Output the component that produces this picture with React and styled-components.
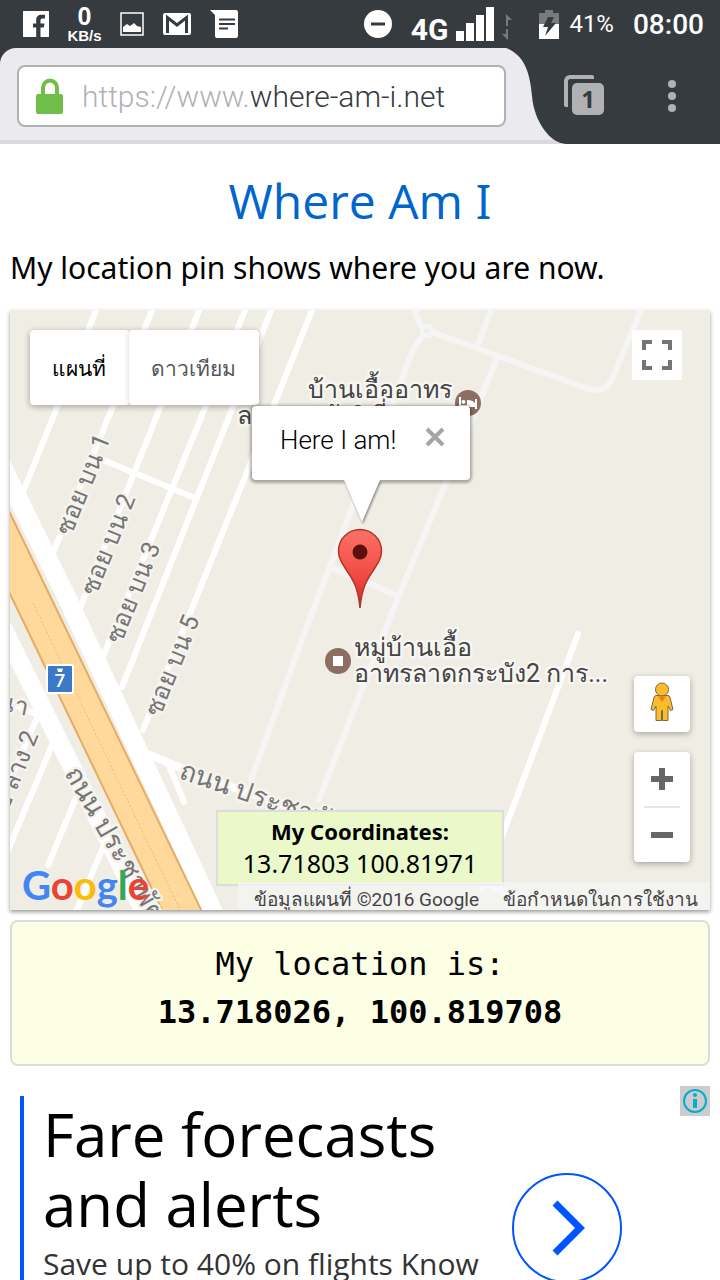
import React, { useState } from "react";
import styled, { createGlobalStyle } from "styled-components";

const STREETS = [
  "M97 308L23 492",
  "M153 308L53 553",
  "M200 308L80 608",
  "M246 308L103 657",
  "M272 308L122 687",
  "M313 308L143 730",
  "M103 460L195 498",
  "M53 743L8 850",
  "M76 798L48 865",
  "M104 845L76 912",
  "M36 720L8 785",
  "M8 702L38 715",
  "M170 768L184 802",
  "M578 634L482 890",
];

const LANES = [
  "M415 308C416 316 418 322 422 327",
  "M422 337C412 348 409 360 402 380C390 415 365 470 330 567C300 640 285 690 250 782",
  "M432 332L498 356L586 388Q604 395 612 379L642 308",
  "M492 308L478 345",
  "M498 356L447 480L397 600L318 802",
  "M330 567L398 596",
];

const STREET_LABELS = [
  { text: "ซอย บน 1", x: 71, y: 537, angle: -68 },
  { text: "ซอย บน 2", x: 96, y: 597, angle: -68 },
  { text: "ซอย บน 3", x: 121, y: 645, angle: -68 },
  { text: "ซอย บน 5", x: 160, y: 718, angle: -68 },
  { text: "ซอย ลาง 2", x: -4, y: 841, angle: -68 },
  { text: "นา", x: -4, y: 709, angle: 12 },
  { text: "ถนน ประชาพัฒนา", x: 178, y: 778, angle: 19, large: true },
  { text: "ถนน ประชาพัฒนา", x: 64, y: 773, angle: 60, large: true },
];

const MapDrawing = () => (
  <MapCanvas
    viewBox="10 310 700 600"
    preserveAspectRatio="xMidYMid slice"
    aria-hidden="true"
  >
    <g fill="none" stroke="#f5f5f5" strokeWidth="6">
      {LANES.map((d) => (
        <path key={d} d={d} />
      ))}
      <circle cx="427" cy="331" r="5" strokeWidth="5" />
    </g>
    <g fill="none" stroke="#fff" strokeWidth="6" strokeLinecap="round">
      {STREETS.map((d) => (
        <path key={d} d={d} />
      ))}
      <path d="M150 755L200 776L333 822L480 880L560 920" strokeWidth="8" />
      <path d="M2 466L68 600L219 924" strokeWidth="19" />
      <path d="M2 626L62 747L150 924" strokeWidth="18" />
    </g>
    <path
      d="M8 509L52 600L204 916H165L13 600L8 590Z"
      fill="#ffd89c"
      stroke="#e8ab63"
      strokeWidth="2"
    />
    <path
      d="M33 603L181 912"
      stroke="#f0ba74"
      strokeWidth="1"
      strokeDasharray="2 2"
    />
    <rect x="46" y="664" width="28" height="30" rx="3" fill="#fff" />
    <rect x="48" y="666" width="24" height="26" rx="1" fill="#3b78c8" />
    <path d="M57 668l2 1 1-1 1 1 2-1-1 4h-4z" fill="#fff" />
    <ShieldText x="60" y="687">
      7
    </ShieldText>
    {STREET_LABELS.map(({ text, x, y, angle, large }) => (
      <StreetText
        key={text + x}
        $large={large}
        x={x}
        y={y}
        transform={`rotate(${angle} ${x} ${y})`}
      >
        {text}
      </StreetText>
    ))}
    <circle cx="468" cy="403" r="13" fill="#8d6e63" />
    <path
      d="M460 397v12M460 406h16M476 399v10"
      stroke="#fff"
      strokeWidth="2"
      fill="none"
    />
    <circle cx="463.500" cy="402" r="2" fill="#fff" />
    <path d="M467 400q7 0 9 5h-9z" fill="#fff" />
    <PlaceText x="308" y="398">
      บ้านเอื้ออาทร
    </PlaceText>
    <PlaceText x="237" y="424">
      ลาดกระบัง2 ที่
    </PlaceText>
    <circle cx="338" cy="661" r="13" fill="#8d6e63" />
    <rect x="333" y="656" width="10" height="10" fill="#fff" />
    <PlaceText x="354" y="656">
      หมู่บ้านเอื้อ
    </PlaceText>
    <PlaceText x="354" y="682">
      อาทรลาดกระบัง2 การ...
    </PlaceText>
    <defs>
      <linearGradient id="pin" x1="0" y1="0" x2="0" y2="1">
        <stop offset="0" stopColor="#fc7268" />
        <stop offset="0.600" stopColor="#f04a41" />
        <stop offset="1" stopColor="#c72c20" />
      </linearGradient>
    </defs>
    <path
      d="M360 608C358 588 354 581 347 571C342 563 338.500 558 338.500 551A21.500 21.500 0 0 1 381.500 551C381.500 558 378 563 373 571C366 581 362 588 360 608Z"
      fill="url(#pin)"
      stroke="#b4352c"
      strokeWidth="1.500"
    />
    <circle cx="360" cy="552" r="7.500" fill="#5c0f0c" />
  </MapCanvas>
);

const App = () => {
  const [mapType, setMapType] = useState("map");
  const [infoOpen, setInfoOpen] = useState(true);
  return (
    <Screen>
      <GlobalStyle />
      <StatusBar>
        <StatusGroup>
          <svg width="26" height="26" viewBox="0 0 26 26">
            <path
              fill="#fff"
              d="M0 0h26v26h-8.500v-9.500h3.300l.7-4h-4V9.800c0-1.500.6-2.200 2.200-2.200H22V3.800h-3.500c-3.600 0-5.300 2-5.300 5.300v3.400H10v4h3.200V26H0z"
            />
          </svg>
          <NetSpeed>
            <b>0</b>
            <span>KB/s</span>
          </NetSpeed>
          <svg width="24" height="24" viewBox="0 0 24 24">
            <rect x="1" y="1" width="22" height="22" fill="none" stroke="#fff" strokeWidth="1.500" />
            <path fill="#fff" d="M3 20v-5l4-3 3 2 4-3 3 3 4 1v5z" />
          </svg>
          <svg width="28" height="22" viewBox="0 0 28 22">
            <rect width="28" height="22" rx="2" fill="#fff" />
            <path
              d="M4.500 20V4.500L14 12l9.500-7.500V20"
              fill="none"
              stroke="#363b3f"
              strokeWidth="3"
            />
          </svg>
          <svg width="28" height="28" viewBox="0 0 28 28">
            <path fill="#fff" d="M0 0h26q2 0 2 2v24q0 2-2 2H7q-2 0-2-2V5z" />
            <path d="M9 9.500h16M9 14h16M9 18.500h9" stroke="#363b3f" strokeWidth="2" />
          </svg>
        </StatusGroup>
        <StatusGroup>
          <svg width="28" height="28" viewBox="0 0 28 28">
            <circle cx="14" cy="14" r="14" fill="#fff" />
            <path d="M7 14h14" stroke="#363b3f" strokeWidth="3" />
          </svg>
          <Network>
            <strong>4G</strong>
            <svg width="38" height="34" viewBox="0 0 38 34">
              <path
                fill="#fff"
                d="M0 24h8v10H0zM10 16h8v18h-8zM20 8h8v26h-8zM30 0h8v34h-8z"
              />
            </svg>
            <svg width="10" height="28" viewBox="0 0 10 28">
              <path
                fill="#777b7e"
                d="M4 1l6 6H6v6H4zM4 27V16h2v11l-6-6h4z"
              />
            </svg>
          </Network>
          <Battery>
            <svg width="20" height="29" viewBox="0 0 20 29">
              <path fill="#777b7e" d="M6 0h8v3h6v11H0V3h6z" />
              <path fill="#fff" d="M0 14h20v15H0z" />
              <path fill="#363b3f" d="M9 7h6l-3 6h5L6 26l3-9H4z" />
            </svg>
            41%
          </Battery>
          <Clock>08:00</Clock>
        </StatusGroup>
      </StatusBar>
      <BrowserBar>
        <AddressArea>
          <AddressButton type="button" aria-label="Address">
            <svg width="28" height="36" viewBox="0 0 28 36">
              <path
                d="M7 18V10a7 7.500 0 0 1 14 0v8"
                fill="none"
                stroke="#6fbe4a"
                strokeWidth="4"
              />
              <rect y="16" width="27" height="20" rx="2" fill="#6fbe4a" />
            </svg>
            <span>
              <Scheme>https://www.</Scheme>where-am-i.net
            </span>
          </AddressButton>
        </AddressArea>
        <svg width="60" height="96" viewBox="0 0 60 96">
          <path
            fill="#ebeaef"
            d="M0 0C18 7 24 24 26 48C28 74 45 96 60 96H0Z"
          />
          <path fill="#dad9e0" d="M0 92H48Q54 96 60 96H0Z" />
        </svg>
        <BrowserActions>
          <IconButton type="button" aria-label="Tabs">
            <TabBack />
            <TabCount>1</TabCount>
          </IconButton>
          <IconButton type="button" aria-label="Menu">
            <svg width="8" height="32" viewBox="0 0 8 32">
              <g fill="#b1b1b3">
                <circle cx="4" cy="4" r="4" />
                <circle cx="4" cy="16" r="4" />
                <circle cx="4" cy="28" r="4" />
              </g>
            </svg>
          </IconButton>
        </BrowserActions>
      </BrowserBar>
      <Page>
        <Title>Where Am I</Title>
        <Intro>My location pin shows where you are now.</Intro>
        <MapBox>
          <MapDrawing />
          <MapTypes>
            <MapType
              type="button"
              $active={mapType === "map"}
              onClick={() => setMapType("map")}
            >
              แผนที่
            </MapType>
            <MapType
              type="button"
              $active={mapType === "satellite"}
              onClick={() => setMapType("satellite")}
            >
              ดาวเทียม
            </MapType>
          </MapTypes>
          <Fullscreen type="button" aria-label="Fullscreen">
            <svg width="32" height="32" viewBox="0 0 32 32">
              <path
                d="M3 11V3h8M21 3h8v8M29 21v8h-8M11 29H3v-8"
                fill="none"
                stroke="#757575"
                strokeWidth="4"
              />
            </svg>
          </Fullscreen>
          {infoOpen && (
            <InfoWindow>
              <span>Here I am!</span>
              <CloseButton
                type="button"
                aria-label="Close"
                onClick={() => setInfoOpen(false)}
              >
                <svg width="20" height="20" viewBox="0 0 20 20">
                  <path d="M2 2l16 16M18 2L2 18" stroke="#a5a5a5" strokeWidth="4" />
                </svg>
              </CloseButton>
              <InfoTail width="40" height="44" viewBox="0 0 40 44">
                <path d="M2 0L20 42L38 0Z" fill="#fff" />
              </InfoTail>
            </InfoWindow>
          )}
          <MapControls>
            <StreetView type="button" aria-label="Street View">
              <svg width="24" height="40" viewBox="0 0 24 40">
                <g fill="#fbbc29" stroke="#77694e" strokeWidth="1">
                  <path d="M6 13.500h12q1.500 0 2 2l3 12-2.500 1L18 24v14.500h-5.500v-10h-1v10H6V24l-2.500 4.500L1 27.500l3-12q.5-2 2-2z" />
                  <circle cx="12" cy="7.500" r="6.500" />
                </g>
                <path fill="#e58317" d="M8 14.500h8L12 20z" />
              </svg>
            </StreetView>
            <ZoomBox>
              <ZoomButton type="button" aria-label="Zoom in">
                <svg width="22" height="22" viewBox="0 0 22 22">
                  <path d="M0 11h22M11 0v22" stroke="#666" strokeWidth="6" />
                </svg>
              </ZoomButton>
              <ZoomLine />
              <ZoomButton type="button" aria-label="Zoom out">
                <svg width="22" height="22" viewBox="0 0 22 22">
                  <path d="M0 11h22" stroke="#666" strokeWidth="6" />
                </svg>
              </ZoomButton>
            </ZoomBox>
          </MapControls>
          <Coordinates>
            <b>My Coordinates:</b>
            <span>13.71803 100.81971</span>
          </Coordinates>
          <GoogleLogo href="#google">
            <Letter $color="#4285f4">G</Letter>
            <Letter $color="#ea4335">o</Letter>
            <Letter $color="#fbbc05">o</Letter>
            <Letter $color="#4285f4">g</Letter>
            <Letter $color="#34a853">l</Letter>
            <Letter $color="#ea4335">e</Letter>
          </GoogleLogo>
          <Attribution>
            <span>ข้อมูลแผนที่ ©2016 Google</span>
            <a href="#terms">ข้อกำหนดในการใช้งาน</a>
          </Attribution>
        </MapBox>
        <LocationBox>
          <span>My location is:</span>
          <b>13.718026, 100.819708</b>
        </LocationBox>
        <Ad>
          <AdBody>
            <AdText>
              <AdTitle>Fare forecasts and alerts</AdTitle>
              <AdCopy>Save up to 40% on flights Know</AdCopy>
            </AdText>
            <AdButton type="button" aria-label="Open">
              <svg width="36" height="56" viewBox="0 0 36 56">
                <path
                  d="M6 3L31 28L6 53"
                  fill="none"
                  stroke="#0055ff"
                  strokeWidth="7"
                />
              </svg>
            </AdButton>
          </AdBody>
          <AdInfo type="button" aria-label="About this ad">
            <svg width="26" height="26" viewBox="0 0 26 26">
              <circle cx="13" cy="13" r="11" fill="none" stroke="#00aecd" strokeWidth="2" />
              <path d="M13 11v9" stroke="#00aecd" strokeWidth="4" />
              <circle cx="13" cy="7" r="2" fill="#00aecd" />
            </svg>
          </AdInfo>
        </Ad>
      </Page>
    </Screen>
  );
};

export default App;

const GlobalStyle = createGlobalStyle`
  * {
    box-sizing: border-box;
  }
  body {
    margin: 0;
    background-color: white;
    color: black;
    font-family: "Noto Sans", "Open Sans", sans-serif;
  }
  button {
    margin: 0;
    padding: 0;
    border: 0;
    font: inherit;
    color: inherit;
    cursor: pointer;
  }
  svg {
    display: block;
    flex-shrink: 0;
  }
`;

const Screen = styled.div`
  display: flex;
  flex-direction: column;
  height: 100vh;
  overflow: hidden;
`;

const StatusBar = styled.header`
  display: flex;
  justify-content: space-between;
  align-items: center;
  flex-shrink: 0;
  height: 48px;
  padding: 0 16px 0 23px;
  background-color: #363b3f;
  color: white;
  font-family: Roboto, sans-serif;
`;

const StatusGroup = styled.div`
  display: flex;
  align-items: center;
  gap: 19px;
`;

const NetSpeed = styled.div`
  display: flex;
  flex-direction: column;
  align-items: center;
  width: 33px;
  font-family: "Liberation Sans", sans-serif;
  font-weight: 700;
  font-size: 15px;
  line-height: 16px;
  b {
    font-size: 25px;
    line-height: 24px;
  }
`;

const Network = styled.div`
  display: flex;
  align-items: flex-end;
  gap: 8px;
  margin-right: 8px;
  strong {
    font-size: 30px;
    line-height: 22px;
  }
`;

const Battery = styled.span`
  display: flex;
  align-items: center;
  gap: 10px;
  font-size: 24px;
`;

const Clock = styled.span`
  font-size: 28px;
  font-weight: 500;
`;

const BrowserBar = styled.div`
  display: flex;
  flex-shrink: 0;
  height: 96px;
  background-color: #363b3f;
`;

const AddressArea = styled.div`
  flex-grow: 1;
  padding: 17px 0 0 17px;
  border-bottom: 4px solid #dad9e0;
  border-top-left-radius: 16px;
  background-color: #ebeaef;
`;

const AddressButton = styled.button`
  display: flex;
  align-items: center;
  gap: 18px;
  width: 100%;
  height: 62px;
  padding: 0 17px;
  border: 2px solid #b1b1b3;
  border-radius: 8px;
  background-color: white;
  color: #363b40;
  font-family: Roboto, sans-serif;
  font-weight: 300;
  font-size: 30px;
`;

const Scheme = styled.span`
  color: #b1b1b3;
`;

const BrowserActions = styled.div`
  display: flex;
  justify-content: space-between;
  width: 154px;
  padding: 0 24px 0 0;
`;

const IconButton = styled.button`
  position: relative;
  display: grid;
  place-items: center;
  min-width: 48px;
  background-color: transparent;
`;

const TabBack = styled.span`
  position: absolute;
  left: 0;
  top: 27px;
  width: 30px;
  height: 32px;
  margin-left: -2px;
  border: 4px solid #b1b1b3;
  border-right: 0;
  border-bottom: 0;
  border-radius: 6px 2px 0 2px;
`;

const TabCount = styled.span`
  position: absolute;
  left: 6px;
  top: 35px;
  width: 32px;
  border-radius: 5px;
  background-color: #b1b1b3;
  color: #363b40;
  font-family: "Open Sans", sans-serif;
  font-weight: 700;
  font-size: 24px;
  line-height: 32px;
`;

const Page = styled.main`
  display: flex;
  flex-direction: column;
  flex-grow: 1;
  min-height: 0;
  padding: 0 10px;
`;

const Title = styled.h1`
  margin: 24px 0 0;
  color: #0066cc;
  font-family: "Open Sans", sans-serif;
  font-weight: 400;
  font-size: 48px;
  line-height: 66px;
  text-align: center;
  font-feature-settings: "ss01";
`;

const Intro = styled.p`
  margin: 12px 0 20px;
  font-size: 30px;
  line-height: 44px;
`;

const MapBox = styled.section`
  position: relative;
  flex-shrink: 0;
  height: 600px;
  background-color: #efede4;
  box-shadow: 0 2px 4px rgba(0, 0, 0, 0.4);
  overflow: hidden;
  font-family: Roboto, sans-serif;
`;

const MapCanvas = styled.svg`
  width: 100%;
  height: 100%;
`;

const StreetText = styled.text`
  fill: #757575;
  stroke: #f5f3ee;
  stroke-width: 5px;
  stroke-linejoin: round;
  paint-order: stroke;
  font-size: ${({ $large }) => ($large ? "27px" : "25px")};
`;

const PlaceText = styled.text`
  fill: #444;
  stroke: #f7f6f2;
  stroke-width: 5px;
  stroke-linejoin: round;
  paint-order: stroke;
  font-size: 25px;
`;

const ShieldText = styled.text`
  fill: white;
  font-size: 19px;
  font-weight: 500;
  text-anchor: middle;
`;

const MapTypes = styled.div`
  position: absolute;
  top: 20px;
  left: 20px;
  display: flex;
  border-radius: 4px;
  box-shadow: 0 2px 6px rgba(0, 0, 0, 0.2);
`;

const MapType = styled.button`
  height: 75px;
  padding: 2px 23px 0 22px;
  border-radius: 4px;
  background-color: white;
  box-shadow: 0 1px 6px rgba(0, 0, 0, 0.15);
  color: ${({ $active }) => ($active ? "#000" : "#565656")};
  font-size: 21px;
`;

const Fullscreen = styled.button`
  position: absolute;
  top: 20px;
  right: 28px;
  display: grid;
  place-items: center;
  width: 50px;
  height: 50px;
  background-color: white;
`;

const InfoWindow = styled.div`
  position: absolute;
  top: 96px;
  left: calc(50% - 108px);
  display: flex;
  justify-content: space-between;
  width: 218px;
  height: 74px;
  padding: 20px 25px 0 28px;
  border-radius: 4px;
  background-color: white;
  box-shadow: 0 1px 3px 2px rgba(0, 0, 0, 0.3);
  font-size: 26px;
  font-weight: 300;
  line-height: 28px;
`;

const CloseButton = styled.button`
  height: 22px;
  background-color: transparent;
`;

const InfoTail = styled.svg`
  position: absolute;
  top: 74px;
  left: 90px;
  filter: drop-shadow(1px 2px 1px rgba(0, 0, 0, 0.4));
`;

const MapControls = styled.div`
  position: absolute;
  right: 20px;
  bottom: 48px;
  display: flex;
  flex-direction: column;
  gap: 20px;
  width: 56px;
`;

const StreetView = styled.button`
  display: grid;
  place-items: center;
  height: 56px;
  padding-bottom: 4px;
  border-radius: 4px;
  background-color: white;
  box-shadow: 0 2px 6px rgba(0, 0, 0, 0.3);
`;

const ZoomBox = styled.div`
  border-radius: 4px;
  background-color: white;
  box-shadow: 0 2px 6px rgba(0, 0, 0, 0.3);
`;

const ZoomButton = styled.button`
  display: grid;
  place-items: center;
  width: 100%;
  height: 54px;
  background-color: transparent;
`;

const ZoomLine = styled.div`
  height: 2px;
  margin: 0 10px;
  background-color: #e6e6e6;
`;

const Coordinates = styled.div`
  position: absolute;
  left: calc(50% - 144px);
  bottom: 24px;
  display: flex;
  flex-direction: column;
  align-items: center;
  width: 288px;
  height: 76px;
  padding: 3px 0;
  border: 2px solid #dcdcdc;
  background-color: #ebf8ca;
  font-family: "Noto Sans", sans-serif;
  font-size: 25px;
  line-height: 32px;
  b {
    font-size: 22px;
  }
`;

const GoogleLogo = styled.a`
  position: absolute;
  left: 12px;
  bottom: 0;
  font-family: Lato, sans-serif;
  font-weight: 700;
  font-size: 40px;
  line-height: 50px;
  text-decoration: none;
`;

const Letter = styled.span`
  color: ${({ $color }) => $color};
`;

const Attribution = styled.div`
  position: absolute;
  right: 0;
  bottom: 0;
  display: flex;
  gap: 24px;
  height: 28px;
  padding: 0 12px 0 16px;
  background-color: rgba(245, 245, 245, 0.7);
  color: #444;
  font-size: 19px;
  line-height: 36px;
  white-space: nowrap;
  a {
    color: inherit;
    text-decoration: none;
  }
`;

const LocationBox = styled.section`
  display: flex;
  flex-direction: column;
  align-items: center;
  flex-shrink: 0;
  height: 146px;
  margin-top: 10px;
  padding-top: 18px;
  border: 2px solid #dcdcdc;
  border-radius: 8px;
  background-color: #fcffe3;
  font-family: "DejaVu Sans Mono", monospace;
  font-size: 32px;
  line-height: 48px;
`;

const Ad = styled.aside`
  position: relative;
  flex-grow: 1;
  min-height: 0;
  margin-top: 20px;
  padding: 10px 0 0 10px;
  overflow: hidden;
  font-family: "Open Sans", sans-serif;
`;

const AdBody = styled.div`
  display: flex;
  align-items: flex-start;
  justify-content: space-between;
  height: 220px;
  padding-right: 88px;
  border-left: 4px solid #0055ff;
`;

const AdText = styled.div`
  padding: 3px 0 0 19px;
  width: 468px;
`;

const AdTitle = styled.h2`
  margin: 0;
  font-weight: 400;
  font-size: 60px;
  line-height: 70px;
`;

const AdCopy = styled.p`
  margin: 5px 0 0;
  color: #333;
  font-size: 30px;
  line-height: 40px;
`;

const AdButton = styled.button`
  display: grid;
  place-items: center;
  width: 110px;
  height: 110px;
  margin-top: 77px;
  border: 2px solid #0055ff;
  border-radius: 50%;
  background-color: white;
`;

const AdInfo = styled.button`
  position: absolute;
  top: 0;
  right: 0;
  display: grid;
  place-items: center;
  width: 30px;
  height: 30px;
  background-color: #ccc;
`;
